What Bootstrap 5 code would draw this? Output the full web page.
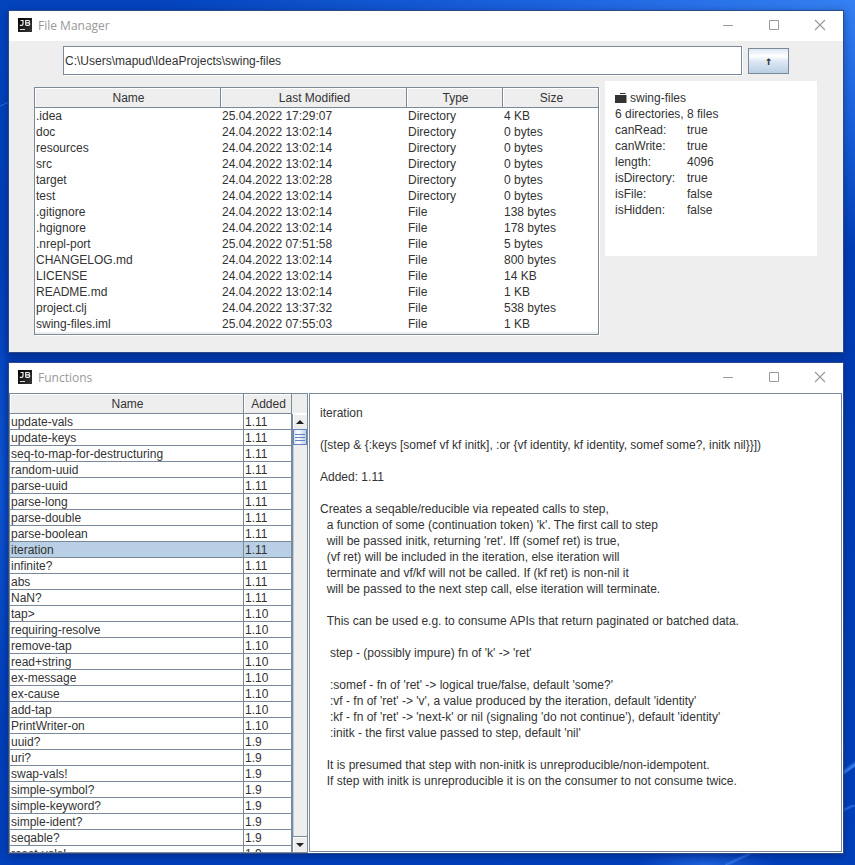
<!DOCTYPE html>
<html lang="en">
<head>
<meta charset="utf-8">
<meta name="viewport" content="width=device-width, initial-scale=1">
<title>File Manager</title>
<link rel="stylesheet" href="https://cdn.jsdelivr.net/npm/bootstrap@5.3.0/dist/css/bootstrap.min.css">
<style>
:root { --line: #7a8a99; --panel: #eeeeee; --ink: #333333; --pick: #b8cfe5; }
body {
  font-family: "Liberation Sans", Arial, sans-serif;
  font-size: 12px; line-height: 16px; color: var(--ink);
  padding: 10px 11px 11px 8px; gap: 9px;
  background:
    linear-gradient(155deg, transparent 48%, rgba(70,140,250,.6) 50%, transparent 52%) right bottom / 130px 60px no-repeat,
    linear-gradient(145deg, transparent 42%, rgba(80,150,255,.8) 50%, transparent 54%) right 0 bottom 70px / 14px 50px no-repeat,
    radial-gradient(ellipse 70px 14px at 705px 100%, rgba(50,120,240,.6), transparent),
    radial-gradient(ellipse 12px 240px at 0 56%, rgba(20,95,220,.75), transparent),
    linear-gradient(155deg, transparent 45%, rgba(40,120,235,.8) 50%, transparent 55%) 0 96px / 9px 16px no-repeat,
    radial-gradient(ellipse 700px 250px at 100% 0, #3580f2, rgba(32,104,228,.85) 45%, transparent),
    linear-gradient(#0344bd, #003bb2 42%, #0240ba);
}
.win { border: 1px solid #2b4a86; background: var(--panel); box-shadow: 0 2px 8px rgba(0,20,80,.45); }
.titlebar { height: 30px; background: #fff; padding: 0 17px 2px 9px; }
.titlebar h1 { font: 12px/28px "Open Sans", "Noto Sans", sans-serif; color: #999; margin: 0 0 0 6px; padding-top: 2px; }
.titlebar button, .bar button, .up-btn { border: 0; padding: 0; }
.titlebar button { background: none; width: 12px; height: 12px; line-height: 0; }
.caps { gap: 34px; }
.titlebar svg, .bar svg { display: block; }

.path-row { padding: 5px 54px 0; gap: 6px; }
.path-field {
  height: 29px; padding: 1px 1px 0; font-size: 12px; color: var(--ink); min-width: 0;
  border: 1px solid var(--line); background: #fff; box-shadow: 1px 1px #fff; outline: 0;
}
.up-btn {
  width: 41px; height: 26px; border: 1px solid var(--line); color: var(--ink);
  font: bold 12px "DejaVu Sans Mono", monospace;
  background: linear-gradient(#dde8f3, #fff 30%, #dfe9f3 50%, #b8cfe5);
}
.files-row { padding: 6px 26px 17px 25px; gap: 6px; }
.files-box { margin-top: 6px; padding-bottom: 2px; border: 1px solid var(--line); box-shadow: 1px 1px #fff; }

.grid { width: 100%; table-layout: fixed; border-collapse: separate; border-spacing: 0; background: #fff; }
.grid th {
  height: 20px; padding: 2px 0 1px 2px; text-align: center; font-weight: normal; line-height: 16px;
  background: var(--panel); border: solid var(--line); border-width: 0 1px 1px 0;
  box-shadow: inset 1px 1px #fff;
}
.grid td { height: 16px; padding: 0 1px; line-height: 16px; white-space: nowrap; overflow: hidden; }
.files-box th:last-child { border-right-width: 0; }
.col-date { width: 186px; }
.col-kind { width: 96px; }
.col-size { width: 95px; }
.col-added { width: 48px; }

.info { width: 212px; height: 175px; background: #fff; padding: 9px 10px; }
.info svg { display: block; margin-right: 3px; }
.info dl { display: grid; grid-template-columns: 72px 1fr; margin: 0; }
.info dt { font-weight: normal; }
.info dd { margin: 0; }

.fn-win { background: #fff; min-height: 300px; }
.fn-list { width: 299px; border: 1px solid var(--line); }
.fn-list td { border: solid var(--line); border-width: 0 1px 1px 0; padding-top: 2px; line-height: 13px; }
.fn-list .picked td { background: var(--pick); }
.bar { width: 15px; background: var(--panel); }
.bar-corner { height: 20px; border-bottom: 1px solid #fff; }
.bar-body { border-left: 1px solid var(--line); }
.bar button { width: 14px; height: 15px; background: var(--panel); display: grid; place-items: center; box-shadow: inset 1px 1px #fff; }
.bar .bar-down { border-top: 1px solid var(--line); height: 16px; }
.bar-thumb { height: 16px; border: 1px solid #6382bf; background: linear-gradient(90deg, #d3e1f0, #fff 35%, #b8cfe5); display: grid; place-items: center; }
.bar-track { border-left: 1px solid var(--pick); }
.doc { margin: 0 1px 1px 1px; border: 1px solid var(--line); padding: 11px 10px; background: #fff; min-width: 0; }
.doc pre { font: inherit; color: inherit; margin: 0; white-space: pre-wrap; overflow: hidden; }
</style>
<script src="https://cdn.jsdelivr.net/npm/bootstrap@5.3.0/dist/js/bootstrap.bundle.min.js"></script>
</head>
<body class="vh-100 d-flex flex-column overflow-hidden">

<svg width="0" height="0" class="position-absolute" aria-hidden="true">
  <defs>
    <linearGradient id="ink" x1="0" y1="0" x2="1" y2="1"><stop offset="0" stop-color="#000"/><stop offset="1" stop-color="#383838"/></linearGradient>
    <symbol id="app" viewBox="0 0 14 14">
      <rect width="14" height="14" fill="url(#ink)"/>
      <path d="M2.500 2.500h2.500v3.500q0 1.300-1.300 1.300H1.800M7.700 7.300V2.500h2.600q1.200 0 1.200 1.100t-1.200 1.200H7.700M10.300 4.800q1.500 0 1.500 1.250t-1.500 1.250H7.700" fill="none" stroke="#eee" stroke-width="1.200"/>
      <path d="M2 11.500h5" stroke="#ddd"/>
    </symbol>
    <symbol id="min" viewBox="0 0 12 12"><path d="M1 6.500h10" stroke="#999"/></symbol>
    <symbol id="max" viewBox="0 0 12 12"><path d="M1.500 1.500h9v9h-9z" fill="none" stroke="#999"/></symbol>
    <symbol id="shut" viewBox="0 0 12 12"><path d="M1 1l10 10M11 1L1 11" stroke="#999" stroke-width="1.100"/></symbol>
  </defs>
</svg>

<section class="win flex-shrink-0">
  <header class="titlebar d-flex align-items-center">
    <svg width="14" height="14" aria-hidden="true"><use href="#app"/></svg>
    <h1>File Manager</h1>
    <div class="caps d-flex ms-auto">
      <button type="button" aria-label="Minimize"><svg width="12" height="12"><use href="#min"/></svg></button>
      <button type="button" aria-label="Maximize"><svg width="12" height="12"><use href="#max"/></svg></button>
      <button type="button" aria-label="Close"><svg width="12" height="12"><use href="#shut"/></svg></button>
    </div>
  </header>

  <div class="path-row d-flex align-items-center">
    <input class="path-field flex-fill" type="text" aria-label="Path" value="C:\Users\mapud\IdeaProjects\swing-files">
    <button class="up-btn" type="button" aria-label="Up one folder">↑</button>
  </div>

  <div class="files-row d-flex align-items-start">
    <div class="files-box flex-fill">
      <table class="grid">
        <colgroup><col><col class="col-date"><col class="col-kind"><col class="col-size"></colgroup>
        <thead><tr><th scope="col">Name</th><th scope="col">Last Modified</th><th scope="col">Type</th><th scope="col">Size</th></tr></thead>
        <tbody>
          <tr><td>.idea</td><td>25.04.2022 17:29:07</td><td>Directory</td><td>4 KB</td></tr>
          <tr><td>doc</td><td>24.04.2022 13:02:14</td><td>Directory</td><td>0 bytes</td></tr>
          <tr><td>resources</td><td>24.04.2022 13:02:14</td><td>Directory</td><td>0 bytes</td></tr>
          <tr><td>src</td><td>24.04.2022 13:02:14</td><td>Directory</td><td>0 bytes</td></tr>
          <tr><td>target</td><td>24.04.2022 13:02:28</td><td>Directory</td><td>0 bytes</td></tr>
          <tr><td>test</td><td>24.04.2022 13:02:14</td><td>Directory</td><td>0 bytes</td></tr>
          <tr><td>.gitignore</td><td>24.04.2022 13:02:14</td><td>File</td><td>138 bytes</td></tr>
          <tr><td>.hgignore</td><td>24.04.2022 13:02:14</td><td>File</td><td>178 bytes</td></tr>
          <tr><td>.nrepl-port</td><td>25.04.2022 07:51:58</td><td>File</td><td>5 bytes</td></tr>
          <tr><td>CHANGELOG.md</td><td>24.04.2022 13:02:14</td><td>File</td><td>800 bytes</td></tr>
          <tr><td>LICENSE</td><td>24.04.2022 13:02:14</td><td>File</td><td>14 KB</td></tr>
          <tr><td>README.md</td><td>24.04.2022 13:02:14</td><td>File</td><td>1 KB</td></tr>
          <tr><td>project.clj</td><td>24.04.2022 13:37:32</td><td>File</td><td>538 bytes</td></tr>
          <tr><td>swing-files.iml</td><td>25.04.2022 07:55:03</td><td>File</td><td>1 KB</td></tr>
        </tbody>
      </table>
    </div>
    <aside class="info flex-shrink-0">
      <div class="d-flex align-items-center">
        <svg width="12" height="10" viewBox="0 0 12 10" aria-hidden="true"><path d="M0 2h11.500v8H0zM5 0h5.500v1H5z" fill="#333"/></svg>
        <span>swing-files</span>
      </div>
      <div>6 directories, 8 files</div>
      <dl>
        <dt>canRead:</dt><dd>true</dd>
        <dt>canWrite:</dt><dd>true</dd>
        <dt>length:</dt><dd>4096</dd>
        <dt>isDirectory:</dt><dd>true</dd>
        <dt>isFile:</dt><dd>false</dd>
        <dt>isHidden:</dt><dd>false</dd>
      </dl>
    </aside>
  </div>
</section>

<section class="win fn-win d-flex flex-column flex-fill">
  <header class="titlebar d-flex align-items-center flex-shrink-0">
    <svg width="14" height="14" aria-hidden="true"><use href="#app"/></svg>
    <h1>Functions</h1>
    <div class="caps d-flex ms-auto">
      <button type="button" aria-label="Minimize"><svg width="12" height="12"><use href="#min"/></svg></button>
      <button type="button" aria-label="Maximize"><svg width="12" height="12"><use href="#max"/></svg></button>
      <button type="button" aria-label="Close"><svg width="12" height="12"><use href="#shut"/></svg></button>
    </div>
  </header>

  <div class="d-flex flex-fill overflow-hidden">
    <div class="fn-list d-flex flex-shrink-0">
      <div class="flex-fill overflow-hidden">
        <table class="grid">
          <colgroup><col><col class="col-added"></colgroup>
          <thead><tr><th scope="col">Name</th><th scope="col">Added</th></tr></thead>
          <tbody>
            <tr><td>update-vals</td><td>1.11</td></tr>
            <tr><td>update-keys</td><td>1.11</td></tr>
            <tr><td>seq-to-map-for-destructuring</td><td>1.11</td></tr>
            <tr><td>random-uuid</td><td>1.11</td></tr>
            <tr><td>parse-uuid</td><td>1.11</td></tr>
            <tr><td>parse-long</td><td>1.11</td></tr>
            <tr><td>parse-double</td><td>1.11</td></tr>
            <tr><td>parse-boolean</td><td>1.11</td></tr>
            <tr class="picked"><td>iteration</td><td>1.11</td></tr>
            <tr><td>infinite?</td><td>1.11</td></tr>
            <tr><td>abs</td><td>1.11</td></tr>
            <tr><td>NaN?</td><td>1.11</td></tr>
            <tr><td>tap&gt;</td><td>1.10</td></tr>
            <tr><td>requiring-resolve</td><td>1.10</td></tr>
            <tr><td>remove-tap</td><td>1.10</td></tr>
            <tr><td>read+string</td><td>1.10</td></tr>
            <tr><td>ex-message</td><td>1.10</td></tr>
            <tr><td>ex-cause</td><td>1.10</td></tr>
            <tr><td>add-tap</td><td>1.10</td></tr>
            <tr><td>PrintWriter-on</td><td>1.10</td></tr>
            <tr><td>uuid?</td><td>1.9</td></tr>
            <tr><td>uri?</td><td>1.9</td></tr>
            <tr><td>swap-vals!</td><td>1.9</td></tr>
            <tr><td>simple-symbol?</td><td>1.9</td></tr>
            <tr><td>simple-keyword?</td><td>1.9</td></tr>
            <tr><td>simple-ident?</td><td>1.9</td></tr>
            <tr><td>seqable?</td><td>1.9</td></tr>
            <tr><td>reset-vals!</td><td>1.9</td></tr>
          </tbody>
        </table>
      </div>
      <div class="bar d-flex flex-column flex-shrink-0">
        <div class="bar-corner"></div>
        <div class="bar-body d-flex flex-column flex-fill">
          <button type="button" aria-label="Scroll up"><svg width="8" height="4"><path d="M0 4L4 0l4 4z" fill="#222"/></svg></button>
          <div class="bar-thumb"><svg width="10" height="7"><path d="M0 .5h10M0 3.500h10M0 6.500h10" stroke="#6382bf"/></svg></div>
          <div class="bar-track flex-fill"></div>
          <button class="bar-down" type="button" aria-label="Scroll down"><svg width="8" height="4"><path d="M0 0h8L4 4z" fill="#222"/></svg></button>
        </div>
      </div>
    </div>

    <article class="doc flex-fill">
<pre>iteration

([step &amp; {:keys [somef vf kf initk], :or {vf identity, kf identity, somef some?, initk nil}}])

Added: 1.11

Creates a seqable/reducible via repeated calls to step,
  a function of some (continuation token) 'k'. The first call to step
  will be passed initk, returning 'ret'. Iff (somef ret) is true,
  (vf ret) will be included in the iteration, else iteration will
  terminate and vf/kf will not be called. If (kf ret) is non-nil it
  will be passed to the next step call, else iteration will terminate.

  This can be used e.g. to consume APIs that return paginated or batched data.

   step - (possibly impure) fn of 'k' -&gt; 'ret'

   :somef - fn of 'ret' -&gt; logical true/false, default 'some?'
   :vf - fn of 'ret' -&gt; 'v', a value produced by the iteration, default 'identity'
   :kf - fn of 'ret' -&gt; 'next-k' or nil (signaling 'do not continue'), default 'identity'
   :initk - the first value passed to step, default 'nil'

  It is presumed that step with non-initk is unreproducible/non-idempotent.
  If step with initk is unreproducible it is on the consumer to not consume twice.</pre>
    </article>
  </div>
</section>
</body>
</html>
